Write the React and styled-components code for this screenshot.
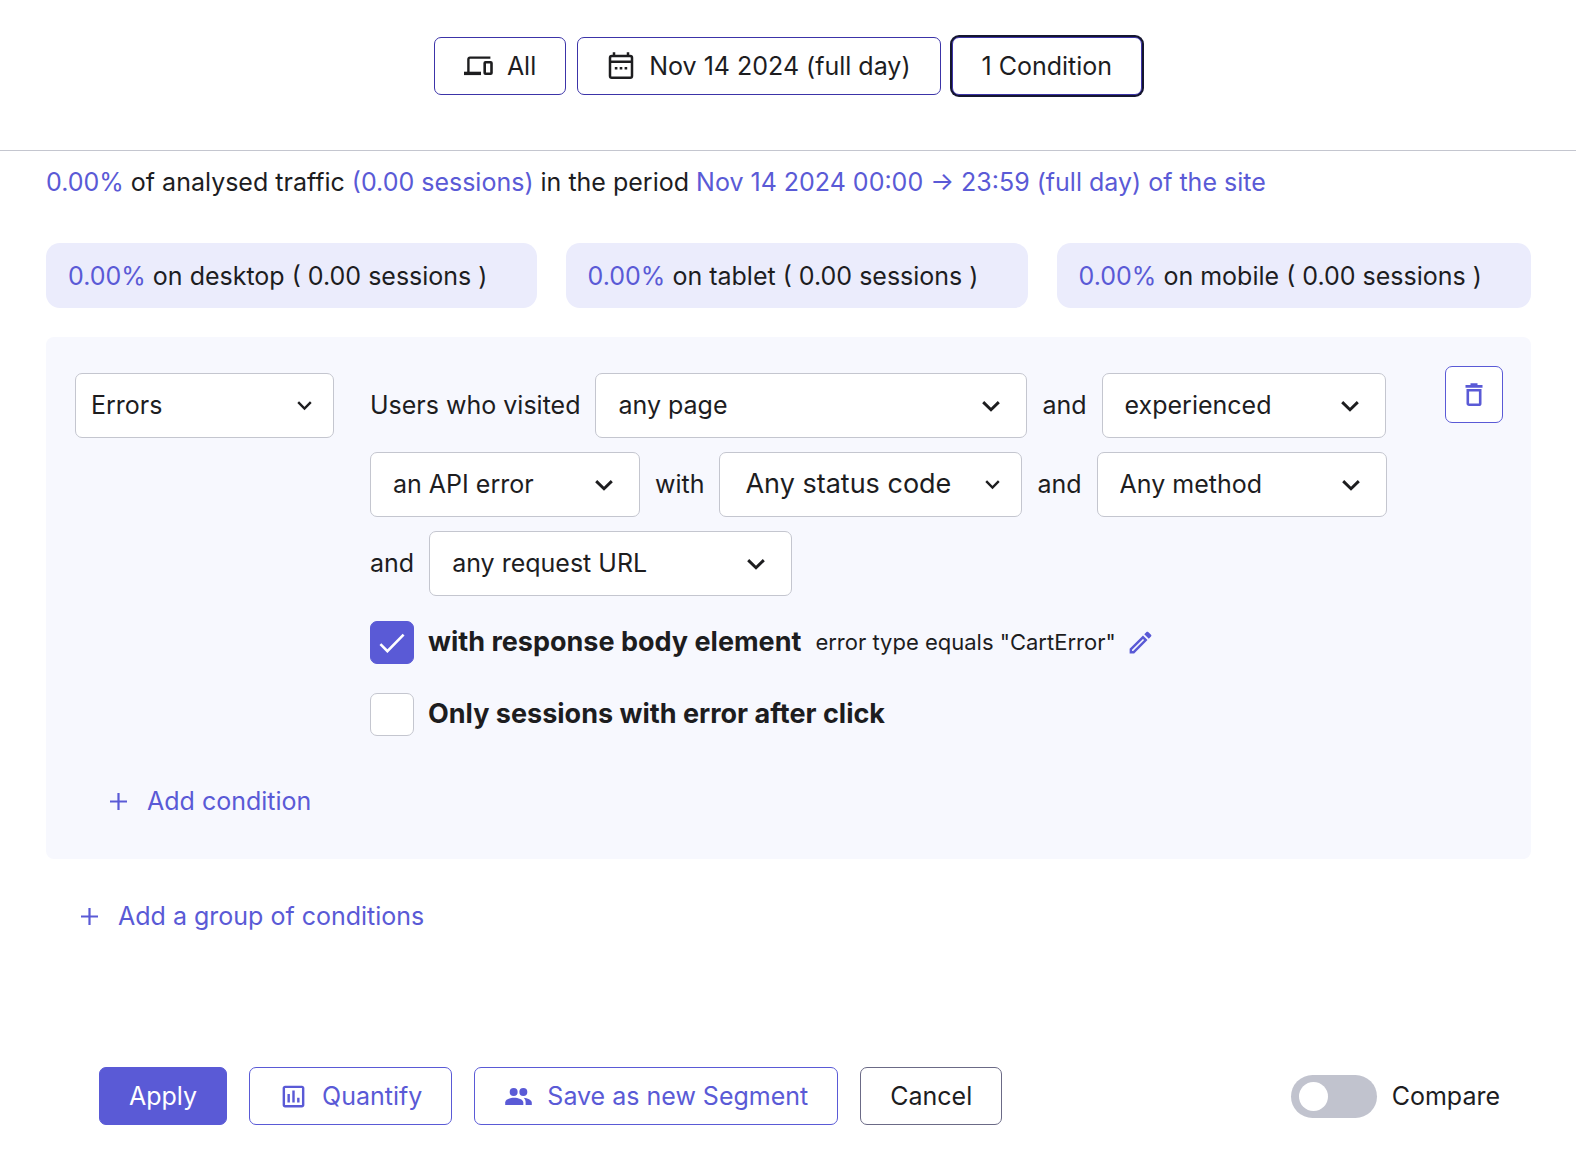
import React, { useId } from "react";
import styled, { createGlobalStyle } from "styled-components";
import { MdOutlineInsertChart, MdOutlineEdit } from "react-icons/md";

const color = {
  ink: "#1d1d1f",
  accent: "#5a5ad6",
  accentDark: "#3c34a8",
  focus: "#15162f",
  line: "#c4c6cf",
  card: "#ebecfc",
  panel: "#f7f8fe",
  neutral: "#6b6a86",
  toggle: "#c1c3ce",
};

const GlobalStyle = createGlobalStyle`
  *, *::before, *::after { box-sizing: border-box; }
  body {
    margin: 0;
    background: #fff;
    color: ${color.ink};
    font-family: Inter, "Liberation Sans", sans-serif;
    font-size: 25px;
    line-height: 36px;
  }
  button, select, input { font: inherit; color: inherit; }
`;

const Header = styled.header`
  display: flex;
  justify-content: center;
  gap: 11px;
  padding: 37px 46px 55px;
  border-bottom: 1px solid ${color.line};
`;

const Button = styled.button`
  display: inline-flex;
  align-items: center;
  gap: 14px;
  height: 58px;
  padding: 0 29px;
  border: 1px solid ${(p) => p.$border || color.accent};
  border-radius: 7px;
  background: ${(p) => p.$fill || "#fff"};
  color: ${(p) => p.$ink || color.ink};
  white-space: nowrap;
  cursor: pointer;
  box-shadow: ${(p) => (p.$active ? `0 0 0 2px ${color.focus}` : "none")};
`;

const Main = styled.main`
  padding: 13px 45px 0 46px;
`;

const Summary = styled.p`
  margin: 0;
`;

const Accent = styled.span`
  color: ${color.accent};
`;

const Cards = styled.div`
  display: flex;
  gap: 29px;
  margin-top: 43px;
`;

const Card = styled.div`
  flex: 1 1 auto;
  height: 65px;
  padding: 15px 22px;
  border-radius: 14px;
  background: ${color.card};
  white-space: nowrap;
`;

const Panel = styled.section`
  margin-top: 29px;
  padding: 29px 28px 36px 29px;
  border-radius: 8px;
  background: ${color.panel};
`;

const Condition = styled.div`
  display: flex;
  align-items: flex-start;
`;

const ConditionBody = styled.div`
  flex: 1;
  padding: 7px 50px 0 0;
`;

const KindSlot = styled.div`
  padding: 7px 36px 0 0;
`;

const Sentence = styled.div`
  display: flex;
  flex-wrap: wrap;
  align-items: center;
  gap: 14px 15px;
`;

const Word = styled.span`
  padding-bottom: 2px;
`;

const Field = styled.div`
  display: grid;
  align-items: center;
  width: ${(p) => p.$width}px;
  height: 65px;
`;

const Select = styled.select`
  grid-area: 1 / 1;
  width: 100%;
  height: 100%;
  padding: 0 ${(p) => p.$inset}px 2px;
  border: 1px solid ${color.line};
  border-radius: 7px;
  background: #fff;
  font-size: ${(p) => p.$size || 25}px;
  appearance: none;
  cursor: pointer;
`;

const FieldIcon = styled.span`
  grid-area: 1 / 1;
  justify-self: end;
  display: flex;
  margin-right: ${(p) => p.$inset}px;
  pointer-events: none;
`;

const IconButton = styled.button`
  display: flex;
  align-items: center;
  justify-content: center;
  width: 58px;
  height: 57px;
  padding: 0;
  border: 1px solid ${color.accent};
  border-radius: 7px;
  background: #fff;
  color: ${color.accent};
  cursor: pointer;
`;

const Options = styled.div`
  display: grid;
  gap: 29px;
  margin-top: 25px;
`;

const Option = styled.div`
  display: flex;
  align-items: center;
  height: 43px;
`;

const CheckBoxWrap = styled.span`
  display: grid;
  place-items: center;
  svg {
    grid-area: 1 / 1;
    pointer-events: none;
  }
`;

const Checkbox = styled.input`
  grid-area: 1 / 1;
  width: 44px;
  height: 43px;
  margin: 0;
  border: 1px solid ${color.line};
  border-radius: 7px;
  background: #fff;
  appearance: none;
  cursor: pointer;
  &:checked {
    border-color: ${color.accent};
    background: ${color.accent};
  }
  &:not(:checked) + svg {
    visibility: hidden;
  }
`;

const OptionLabel = styled.label`
  margin-left: 14px;
  padding-bottom: 1px;
  font-size: 27px;
  font-weight: 700;
`;

const Note = styled.span`
  margin-left: 14px;
  padding-bottom: 2px;
  font-size: 22px;
`;

const BareButton = styled.button`
  display: flex;
  margin-left: 10px;
  padding: 0;
  border: 0;
  background: none;
  color: ${color.accent};
  cursor: pointer;
`;

const AddButton = styled.button`
  display: flex;
  align-items: center;
  gap: 14px;
  height: 44px;
  margin-top: ${(p) => p.$top}px;
  margin-left: 29px;
  padding: 0;
  border: 0;
  background: none;
  color: ${color.accent};
  cursor: pointer;
`;

const Footer = styled.footer`
  display: flex;
  align-items: center;
  gap: 22px;
  padding: 129px 76px 39px 99px;
`;

const Compare = styled.label`
  display: flex;
  align-items: center;
  gap: 15px;
  margin-left: auto;
  cursor: pointer;
`;

const Switch = styled.input`
  display: flex;
  align-items: center;
  width: 86px;
  height: 43px;
  margin: 0;
  padding: 0 8px;
  border-radius: 22px;
  background: ${color.toggle};
  appearance: none;
  cursor: pointer;
  &::before {
    content: "";
    width: 29px;
    height: 29px;
    border-radius: 50%;
    background: #fff;
  }
  &:checked {
    justify-content: flex-end;
    background: ${color.accent};
  }
`;

function Chevron({ small }) {
  return small ? (
    <svg width="15" height="10" viewBox="0 0 15 10" fill="none" stroke={color.ink} strokeWidth="2.4" aria-hidden="true">
      <path d="M1.2 1.2l6.3 6.3 6.3-6.3" />
    </svg>
  ) : (
    <svg width="18" height="12" viewBox="0 0 18 12" fill="none" stroke={color.ink} strokeWidth="2.9" aria-hidden="true">
      <path d="M1.2 2.1L9 9.8l7.8-7.7" />
    </svg>
  );
}

function DevicesIcon() {
  return (
    <svg width="29" height="20" viewBox="0 0 29 20" fill="none" stroke="currentColor" strokeWidth="2.4" aria-hidden="true">
      <path d="M4.4 16.5V3.2q0-1.6 1.6-1.6h20.4" />
      <path d="M0 17.4h17" strokeWidth="3.4" />
      <rect x="20.7" y="6.2" width="6.8" height="11.6" rx="0.8" strokeWidth="2.6" />
    </svg>
  );
}

function CalendarIcon() {
  return (
    <svg width="28" height="30" viewBox="0 0 28 30" fill="none" stroke="currentColor" strokeWidth="2.5" aria-hidden="true">
      <rect x="3" y="5" width="22" height="21.8" rx="1.8" />
      <path d="M3 10.8h22M7 1.2v4M21 1.2v4" />
      <path d="M7.8 17.2h2.6M12.7 17.2h2.6M17.6 17.2h2.6" />
    </svg>
  );
}

function PeopleIcon() {
  return (
    <svg width="29" height="29" viewBox="0 0 24 24" fill="currentColor" aria-hidden="true">
      <circle cx="8" cy="8.2" r="3.3" />
      <circle cx="16" cy="8.2" r="3.3" />
      <path d="M1 19v-2c0-2.7 4.6-4 7.5-4s7.5 1.3 7.5 4v2z" />
      <path d="M17.9 19H23v-2c0-2.4-3.6-3.7-6.8-4 1.2.9 1.7 2.1 1.7 4z" />
    </svg>
  );
}

function TrashIcon() {
  return (
    <svg width="18" height="24" viewBox="0 0 18 24" fill="none" stroke="currentColor" strokeWidth="2.6" aria-hidden="true">
      <path d="M.5 3.4h17M5.5 1.6h7" />
      <path d="M2.8 7.2h12.4v13.2q0 1.4-1.4 1.4H4.2q-1.4 0-1.4-1.4z" />
    </svg>
  );
}

function PlusIcon() {
  return (
    <svg width="29" height="29" viewBox="0 0 29 29" stroke="currentColor" strokeWidth="2.2" aria-hidden="true">
      <path d="M6 14.5h17M14.5 6v17" />
    </svg>
  );
}

function Picker({ label, value, width, inset = 22, iconInset = 27, size, small }) {
  return (
    <Field $width={width}>
      <Select aria-label={label} $inset={inset} $size={size}>
        <option>{value}</option>
      </Select>
      <FieldIcon $inset={iconInset}>
        <Chevron small={small} />
      </FieldIcon>
    </Field>
  );
}

function CheckOption({ label, defaultChecked, children }) {
  const id = useId();
  return (
    <Option>
      <CheckBoxWrap>
        <Checkbox id={id} type="checkbox" defaultChecked={defaultChecked} />
        <svg width="26" height="20" viewBox="0 0 26 20" fill="none" stroke="#fff" strokeWidth="2.6" aria-hidden="true">
          <path d="M1.4 11.2l7 7L24.6 1.6" />
        </svg>
      </CheckBoxWrap>
      <OptionLabel htmlFor={id}>{label}</OptionLabel>
      {children}
    </Option>
  );
}

const devices = ["desktop", "tablet", "mobile"];

export default function App() {
  return (
    <>
      <GlobalStyle />
      <Header>
        <Button $border={color.accentDark}>
          <DevicesIcon />
          All
        </Button>
        <Button $border={color.accentDark}>
          <CalendarIcon />
          Nov 14 2024 (full day)
        </Button>
        <Button $border={color.accentDark} $active>
          1 Condition
        </Button>
      </Header>
      <Main>
        <Summary>
          <Accent>0.00%</Accent> of analysed traffic <Accent>(0.00 sessions)</Accent> in the period{" "}
          <Accent>Nov 14 2024 00:00 → 23:59 (full day) of the site</Accent>
        </Summary>
        <Cards>
          {devices.map((device) => (
            <Card key={device}>
              <Accent>0.00%</Accent> on {device} ( 0.00 sessions )
            </Card>
          ))}
        </Cards>
        <Panel>
          <Condition>
            <KindSlot>
              <Picker label="Condition type" value="Errors" width={259} inset={15} iconInset={22} small />
            </KindSlot>
            <ConditionBody>
              <Sentence>
                <Word>Users who visited</Word>
                <Picker label="Page" value="any page" width={432} />
                <Word>and</Word>
                <Picker label="Experience" value="experienced" width={284} />
                <Picker label="Error kind" value="an API error" width={270} />
                <Word>with</Word>
                <Picker label="Status code" value="Any status code" width={303} inset={25} iconInset={22} size={27} small />
                <Word>and</Word>
                <Picker label="Method" value="Any method" width={290} />
                <Word>and</Word>
                <Picker label="Request URL" value="any request URL" width={363} />
              </Sentence>
              <Options>
                <CheckOption label="with response body element" defaultChecked>
                  <Note>error type equals "CartError"</Note>
                  <BareButton aria-label="Edit response body element">
                    <MdOutlineEdit size={29} />
                  </BareButton>
                </CheckOption>
                <CheckOption label="Only sessions with error after click" />
              </Options>
            </ConditionBody>
            <IconButton aria-label="Delete condition">
              <TrashIcon />
            </IconButton>
          </Condition>
          <AddButton $top={43}>
            <PlusIcon />
            Add condition
          </AddButton>
        </Panel>
        <AddButton $top={35}>
          <PlusIcon />
          Add a group of conditions
        </AddButton>
      </Main>
      <Footer>
        <Button $fill={color.accent} $ink="#fff">Apply</Button>
        <Button $ink={color.accent}>
          <MdOutlineInsertChart size={29} />
          Quantify
        </Button>
        <Button $ink={color.accent}>
          <PeopleIcon />
          Save as new Segment
        </Button>
        <Button $border={color.neutral}>Cancel</Button>
        <Compare>
          <Switch type="checkbox" role="switch" />
          Compare
        </Compare>
      </Footer>
    </>
  );
}
